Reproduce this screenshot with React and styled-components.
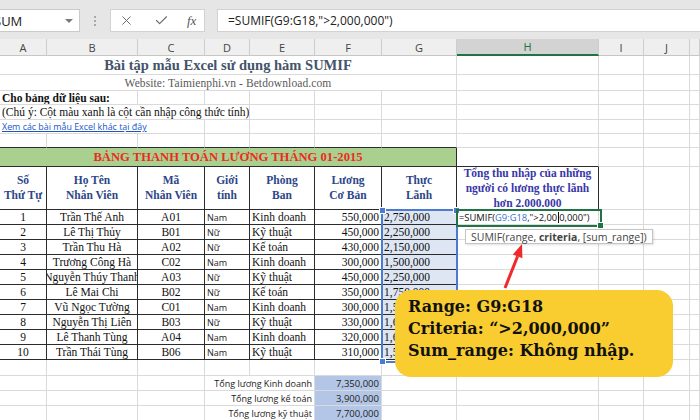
import React from 'react';
import styled, { createGlobalStyle, css } from 'styled-components';
import { X, Check } from 'lucide-react';

const GRID = '#dadada';
const DARK = '#2b2b2b';
const SERIF = '"Liberation Serif", "Times New Roman", serif';
const SANS = '"Open Sans", "Noto Sans", sans-serif';
const W = [47, 91, 67, 45, 65, 67, 75, 142, 45, 46, 10];
const COLS = W.map((w) => `${w}px`).join(' ');
const LETTERS = ['A', 'B', 'C', 'D', 'E', 'F', 'G', 'H', 'I', 'J', ''];

const Global = createGlobalStyle`
  html, body { margin: 0; padding: 0; background: #fff; overflow: hidden; }
  body { width: 700px; height: 420px; }
`;

const Frame = styled.div`
  width: 700px;
  height: 420px;
  overflow: hidden;
  background: #fff;
  font-family: ${SANS};
`;

/* ---------- formula bar ---------- */
const TopBar = styled.div`
  height: 39px;
  box-sizing: border-box;
  padding-top: 9px;
  background: #e6e6e6;
  display: flex;
  align-items: flex-start;
`;
const NameBox = styled.div`
  margin-left: -12px;
  width: 92px;
  height: 23px;
  box-sizing: border-box;
  background: #fff;
  border: 1px solid #cacaca;
  display: flex;
  align-items: center;
  justify-content: space-between;
  padding: 0 6px 0 5px;
  font: 13px ${SANS};
  color: #222;
`;
const Caret = styled.span`
  width: 0;
  height: 0;
  border-left: 4px solid transparent;
  border-right: 4px solid transparent;
  border-top: 4px solid #7a7a7a;
`;
const Grip = styled.div`
  width: 30px;
  height: 23px;
  display: flex;
  flex-direction: column;
  align-items: center;
  justify-content: center;
  gap: 2px;
`;
const GripDot = styled.span`
  width: 2px;
  height: 2px;
  background: #a8a8a8;
`;
const ButtonsBox = styled.div`
  width: 95px;
  height: 23px;
  box-sizing: border-box;
  background: #fff;
  border: 1px solid #d2d2d2;
  display: flex;
  align-items: center;
  padding-left: 8px;
  gap: 20px;
  color: #6b6b6b;
`;
const Fx = styled.span`
  font: italic 13px ${SERIF};
  color: #555;
  margin-left: -2px;
`;
const FormulaBox = styled.div`
  margin-left: 12px;
  flex: 1;
  height: 23px;
  box-sizing: border-box;
  background: #fff;
  border: 1px solid #d2d2d2;
  border-right: none;
  display: flex;
  align-items: center;
  padding-left: 10px;
  font: 12px ${SANS};
  color: #222;
`;

/* ---------- column headers ---------- */
const ColHeads = styled.div`
  display: grid;
  grid-template-columns: ${COLS};
  height: 17px;
  box-sizing: border-box;
  background: #efefef;
  border-bottom: 1px solid #c6c6c6;
`;
const ColHead = styled.div`
  display: flex;
  align-items: center;
  justify-content: center;
  box-sizing: border-box;
  border-right: 1px solid #cdcdcd;
  font: 11px ${SANS};
  color: #444;
  ${(p) =>
    p.$active &&
    css`
      background: #d3d3d3;
      color: #217346;
      border-bottom: 2px solid #217346;
    `}
`;

/* ---------- sheet ---------- */
const Sheet = styled.div`
  position: relative;
`;
const Row = styled.div`
  display: grid;
  grid-template-columns: ${COLS};
  height: ${(p) => p.$h}px;
`;
const Cell = styled.div`
  grid-column: span ${(p) => p.$span || 1};
  box-sizing: border-box;
  min-width: 0;
  border-right: 1px solid ${(p) => p.$r || GRID};
  border-bottom: 1px solid ${(p) => p.$b || GRID};
  background: ${(p) => p.$bg || 'transparent'};
  display: flex;
  align-items: center;
  justify-content: ${(p) =>
    p.$align === 'center' ? 'center' : p.$align === 'right' ? 'flex-end' : 'flex-start'};
  padding: 0 2px;
  overflow: hidden;
  white-space: nowrap;
  position: relative;
`;

const TitleText = styled.span`
  font: bold 14.5px ${SERIF};
  color: #44546a;
`;
const SubText = styled.span`
  font: 11.5px ${SERIF};
  color: #595959;
  letter-spacing: 0.1px;
`;
const NoteText = styled.span`
  font: ${(p) => (p.$bold ? 'bold ' : '')}11.5px ${SERIF};
  color: #111;
`;
const LinkText = styled.span`
  font: 8.9px ${SANS};
  color: #1a56c8;
  text-decoration: underline;
`;
const BoardTitle = styled.span`
  font: bold 12.6px ${SERIF};
  color: #ee2a1e;
`;
const HeadText = styled.span`
  font: bold 11.5px/15px ${SERIF};
  color: ${(p) => p.$c || '#2d4688'};
  text-align: center;
  white-space: nowrap;
`;
const DataText = styled.span`
  flex-shrink: 0;
  font: 11.5px ${SERIF};
  color: #111;
`;
const SmallSans = styled.span`
  font: 9px ${SANS};
  color: #222;
`;
const TotalText = styled.span`
  font: ${(p) => p.$size || 9}px ${SANS};
  color: #222;
`;
const FormulaText = styled.span`
  font: 9.4px ${SANS};
  color: #111;
`;
const RefText = styled.span`
  color: #3a6fd0;
`;
const Caret2 = styled.span`
  display: inline-block;
  width: 1px;
  height: 11px;
  background: #111;
  vertical-align: middle;
  margin: 0 0.5px;
`;

/* ---------- overlays ---------- */
const Selection = styled.div`
  position: absolute;
  left: 381px;
  top: 153px;
  width: 77px;
  height: 154px;
  box-sizing: border-box;
  border: 2px solid #4a7bd0;
  pointer-events: none;
`;
const Handle = styled.span`
  position: absolute;
  width: 5px;
  height: 5px;
  background: ${(p) => p.$c || '#4a7bd0'};
  border: 1px solid #fff;
  ${(p) => (p.$v === 'top' ? 'top: -4px;' : 'bottom: -4px;')}
  ${(p) => (p.$h === 'left' ? 'left: -4px;' : 'right: -4px;')}
`;
const ActiveCell = styled.div`
  position: absolute;
  left: 456px;
  top: 153px;
  width: 146px;
  height: 18px;
  box-sizing: border-box;
  border: 2px solid #217346;
  pointer-events: none;
`;
const Tooltip = styled.div`
  position: absolute;
  left: 465px;
  top: 173px;
  height: 15px;
  box-sizing: border-box;
  padding: 0 5px;
  display: flex;
  align-items: center;
  background: #fff;
  border: 1px solid #c4c4c4;
  box-shadow: 1px 1px 2px rgba(0, 0, 0, 0.12);
  font: 10.5px ${SANS};
  color: #444;
  white-space: nowrap;
`;
const Arrow = styled.svg`
  position: absolute;
  left: 495px;
  top: 183px;
  overflow: visible;
`;
const Callout = styled.div`
  position: absolute;
  left: 395px;
  top: 234px;
  width: 278px;
  height: 87px;
  box-sizing: border-box;
  border-radius: 16px;
  background: #f9cd2f;
  padding: 6px 0 0 13px;
  font: bold 16px/22px "DejaVu Serif", serif;
  color: #111;
  white-space: nowrap;
`;

const people = [
  [1, 'Trần Thế Anh', 'A01', 'Nam', 'Kinh doanh', '550,000', '2,750,000'],
  [2, 'Lê Thị Thủy', 'B01', 'Nữ', 'Kỹ thuật', '450,000', '2,250,000'],
  [3, 'Trần Thu Hà', 'A02', 'Nữ', 'Kế toán', '430,000', '2,150,000'],
  [4, 'Trương Công Hà', 'C02', 'Nam', 'Kinh doanh', '300,000', '1,500,000'],
  [5, 'Nguyễn Thúy Thanh', 'A03', 'Nữ', 'Kỹ thuật', '450,000', '2,250,000'],
  [6, 'Lê Mai Chi', 'B02', 'Nữ', 'Kế toán', '350,000', '1,750,000'],
  [7, 'Vũ Ngọc Tường', 'C01', 'Nam', 'Kinh doanh', '300,000', '1,500,000'],
  [8, 'Nguyễn Thị Liên', 'B03', 'Nữ', 'Kỹ thuật', '330,000', '1,650,000'],
  [9, 'Lê Thanh Tùng', 'A04', 'Nam', 'Kinh doanh', '320,000', '1,600,000'],
  [10, 'Trần Thái Tùng', 'B06', 'Nam', 'Kỹ thuật', '310,000', '1,550,000'],
];

const heads = [
  ['Số', 'Thứ Tự'],
  ['Họ Tên', 'Nhân Viên'],
  ['Mã', 'Nhân Viên'],
  ['Giới', 'tính'],
  ['Phòng', 'Ban'],
  ['Lương', 'Cơ Bản'],
  ['Thực', 'Lãnh'],
];

const totals = [
  ['Tổng lương Kinh doanh', '7,350,000'],
  ['Tổng lương kế toán', '3,900,000'],
  ['Tổng lương kỹ thuật', '7,700,000'],
];

const blanks = (from, to, props = {}) =>
  Array.from({ length: to - from }, (_, i) => <Cell key={`b${from + i}`} {...props} />);

export default function App() {
  return (
    <Frame>
      <Global />
      <TopBar>
        <NameBox>
          SUM
          <Caret />
        </NameBox>
        <Grip>
          <GripDot />
          <GripDot />
          <GripDot />
        </Grip>
        <ButtonsBox>
          <X size={15} strokeWidth={1.6} />
          <Check size={15} strokeWidth={1.8} />
          <Fx>fx</Fx>
        </ButtonsBox>
        <FormulaBox>=SUMIF(G9:G18,"&gt;2,000,000")</FormulaBox>
      </TopBar>

      <ColHeads>
        {LETTERS.map((l, i) => (
          <ColHead key={i} $active={l === 'H'}>
            {l}
          </ColHead>
        ))}
      </ColHeads>

      <Sheet>
        <Row $h={19}>
          <Cell $span={7} $align="center">
            <TitleText>Bài tập mẫu Excel sử dụng hàm SUMIF</TitleText>
          </Cell>
          {blanks(7, 11)}
        </Row>
        <Row $h={16}>
          <Cell $span={7} $align="center">
            <SubText>Website: Taimienphi.vn - Betdownload.com</SubText>
          </Cell>
          {blanks(7, 11)}
        </Row>
        <Row $h={14}>
          <Cell $span={2}>
            <NoteText $bold>Cho bảng dữ liệu sau:</NoteText>
          </Cell>
          {blanks(2, 11)}
        </Row>
        <Row $h={15}>
          <Cell $span={4}>
            <NoteText>(Chú ý: Cột màu xanh là cột cần nhập công thức tính)</NoteText>
          </Cell>
          {blanks(4, 11)}
        </Row>
        <Row $h={14}>
          <Cell $span={3}>
            <LinkText>Xem các bài mẫu Excel khác tại đây</LinkText>
          </Cell>
          {blanks(3, 11)}
        </Row>
        <Row $h={14}>
          {blanks(0, 7, { $b: DARK })}
          {blanks(7, 11)}
        </Row>
        <Row $h={19}>
          <Cell $span={7} $align="center" $bg="#a9d08e" $r={DARK} $b={DARK}>
            <BoardTitle>BẢNG THANH TOÁN LƯƠNG THÁNG 01-2015</BoardTitle>
          </Cell>
          <Cell $b={DARK} />
          {blanks(8, 11)}
        </Row>
        <Row $h={43}>
          {heads.map(([a, b], i) => (
            <Cell key={i} $align="center" $r={DARK} $b={DARK}>
              <HeadText>
                {a}
                <br />
                {b}
              </HeadText>
            </Cell>
          ))}
          <Cell $align="center" $r={DARK} $b={DARK}>
            <HeadText $c="#3838a8">
              Tổng thu nhập của những
              <br />
              người có lương thực lãnh
              <br />
              hơn 2.000.000
            </HeadText>
          </Cell>
          {blanks(8, 11)}
        </Row>

        {people.map(([n, name, code, sex, dept, base, net], idx) => (
          <Row $h={15} key={n}>
            <Cell $align="center" $r={DARK} $b={DARK}>
              <DataText>{n}</DataText>
            </Cell>
            <Cell $align="center" $r={DARK} $b={DARK}>
              <DataText>{name}</DataText>
            </Cell>
            <Cell $align="center" $r={DARK} $b={DARK}>
              <DataText>{code}</DataText>
            </Cell>
            <Cell $r={DARK} $b={DARK}>
              <SmallSans>{sex}</SmallSans>
            </Cell>
            <Cell $r={DARK} $b={DARK}>
              <DataText>{dept}</DataText>
            </Cell>
            <Cell $align="right" $r={DARK} $b={DARK}>
              <DataText>{base}</DataText>
            </Cell>
            <Cell $r={DARK} $b={DARK} $bg="#dde6f2">
              <DataText>{net}</DataText>
            </Cell>
            {idx === 0 ? (
              <Cell>
                <FormulaText>
                  =SUMIF(<RefText>G9:G18</RefText>,"&gt;2,00
                  <Caret2 />
                  0,000")
                </FormulaText>
              </Cell>
            ) : (
              <Cell />
            )}
            {blanks(8, 11)}
          </Row>
        ))}

        <Row $h={16}>{blanks(0, 11)}</Row>

        {totals.map(([label, value]) => (
          <Row $h={15} key={label}>
            {blanks(0, 3)}
            <Cell $span={2} $align="right">
              <TotalText>{label}</TotalText>
            </Cell>
            <Cell $align="right" $bg="#b4c6e7">
              <TotalText $size={9.5}>{value}</TotalText>
            </Cell>
            {blanks(6, 11)}
          </Row>
        ))}

        <Selection>
          <Handle $v="top" $h="left" />
          <Handle $v="top" $h="right" />
          <Handle $v="bottom" $h="left" />
        </Selection>
        <ActiveCell>
          <Handle $v="bottom" $h="right" $c="#217346" />
        </ActiveCell>
        <Tooltip>
          SUMIF(range,&nbsp;<b>criteria</b>, [sum_range])
        </Tooltip>
        <Arrow width="40" height="55" viewBox="0 0 40 55">
          <line x1="10" y1="49" x2="22.6" y2="17.2" stroke="#ee2a2a" strokeWidth="3" />
          <polygon points="27,5 27.4,19.2 17.8,15.4" fill="#ee2a2a" />
        </Arrow>
        <Callout>
          Range: G9:G18
          <br />
          Criteria: “&gt;2,000,000”
          <br />
          Sum_range: Không nhập.
        </Callout>
      </Sheet>
    </Frame>
  );
}
